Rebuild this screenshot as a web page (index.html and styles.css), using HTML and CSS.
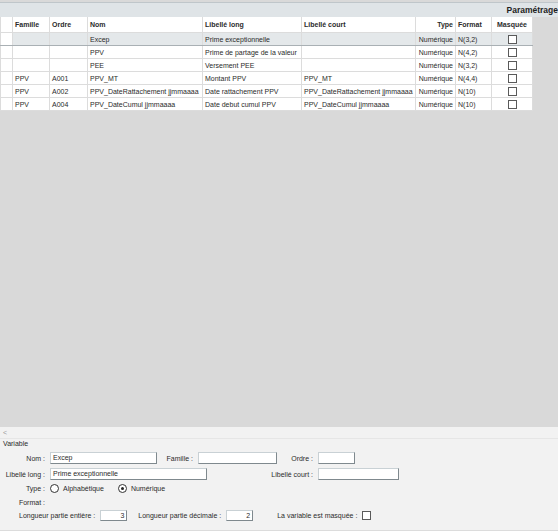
FILE: index.html
```html
<!DOCTYPE html>
<html lang="fr">
<head>
    <meta charset="UTF-8">
    <title>Paramétrage</title>
    <link rel="stylesheet" href="styles.css">
</head>
<body>
<div class="page">
    <div class="topbar"><span class="title">Paramétrage</span></div>
    <table class="grid">
        <colgroup>
            <col style="width:12px"><col style="width:37px"><col style="width:38px">
            <col style="width:115px"><col style="width:99px"><col style="width:114px">
            <col style="width:40px"><col style="width:36px"><col style="width:41px">
        </colgroup>
        <tr class="head">
            <th></th><th>Famille</th><th>Ordre</th><th>Nom</th><th>Libellé long</th>
            <th>Libellé court</th><th class="r">Type</th><th>Format</th><th class="c">Masquée</th>
        </tr>
        <tr class="sel">
            <td class="rh"></td><td></td><td></td><td>Excep</td><td>Prime exceptionnelle</td>
            <td></td><td class="r">Numérique</td><td>N(3,2)</td><td class="c"><span class="box"></span></td>
        </tr>
        <tr>
            <td class="rh"></td><td></td><td></td><td>PPV</td><td>Prime de partage de la valeur</td>
            <td></td><td class="r">Numérique</td><td>N(4,2)</td><td class="c"><span class="box"></span></td>
        </tr>
        <tr>
            <td class="rh"></td><td></td><td></td><td>PEE</td><td>Versement PEE</td>
            <td></td><td class="r">Numérique</td><td>N(3,2)</td><td class="c"><span class="box"></span></td>
        </tr>
        <tr>
            <td class="rh"></td><td>PPV</td><td>A001</td><td>PPV_MT</td><td>Montant PPV</td>
            <td>PPV_MT</td><td class="r">Numérique</td><td>N(4,4)</td><td class="c"><span class="box"></span></td>
        </tr>
        <tr>
            <td class="rh"></td><td>PPV</td><td>A002</td><td>PPV_DateRattachement jjmmaaaa</td><td>Date rattachement PPV</td>
            <td>PPV_DateRattachement jjmmaaaa</td><td class="r">Numérique</td><td>N(10)</td><td class="c"><span class="box"></span></td>
        </tr>
        <tr>
            <td class="rh"></td><td>PPV</td><td>A004</td><td>PPV_DateCumul jjmmaaaa</td><td>Date debut cumul PPV</td>
            <td>PPV_DateCumul jjmmaaaa</td><td class="r">Numérique</td><td>N(10)</td><td class="c"><span class="box"></span></td>
        </tr>
    </table>
    <div class="fill"></div>
    <div class="panel">
        <div class="scroll">&lt;</div>
        <div class="legend">Variable</div>
        <div class="row r1">
            <span class="lbl w46">Nom :</span><span class="field f-nom">Excep</span>
            <span class="lbl w36">Famille :</span><span class="field f-fam"></span>
            <span class="lbl w36">Ordre :</span><span class="field f-ord"></span>
        </div>
        <div class="row r2">
            <span class="lbl w46">Libellé long :</span><span class="field f-long">Prime exceptionnelle</span>
            <span class="lbl w107">Libellé court :</span><span class="field f-court"></span>
        </div>
        <div class="row r3">
            <span class="lbl w46">Type :</span>
            <span class="radio"></span><span class="opt">Alphabétique</span>
            <span class="radio on"></span><span class="opt">Numérique</span>
        </div>
        <div class="row r4">
            <span class="lbl w46">Format :</span>
        </div>
        <div class="row r5">
            <span class="lbl">Longueur partie entière :</span><span class="field num">3</span>
            <span class="lbl gap">Longueur partie décimale :</span><span class="field num">2</span>
            <span class="lbl gap2">La variable est masquée :</span><span class="box"></span>
        </div>
    </div>
</div>
</body>
</html>
```

FILE: styles.css
```css
body {
    margin: 0;
    font-family: "Liberation Sans", Arial, sans-serif;
    font-size: 7px;
    color: #2b2b2b;
}

.page {
    width: 558px;
    height: 531px;
    display: flex;
    flex-direction: column;
    background-color: #d9d9d9;
    overflow: hidden;
}

.topbar {
    height: 14px;
    margin-top: 2px;
    border-top: 1px solid #bfc6ca;
    background-color: #dfe4e7;
    display: flex;
    align-items: center;
    justify-content: flex-end;
    white-space: nowrap;
    overflow: hidden;
}

.title {
    font-weight: bold;
    font-size: 8.5px;
    margin-right: 0;
    color: #1e1e1e;
}

.grid {
    width: 532px;
    table-layout: fixed;
    border-collapse: collapse;
    background-color: #ffffff;
}

.grid th,
.grid td {
    padding: 0 2px;
    height: 12px;
    border: 1px solid #dcdcdc;
    text-align: left;
    white-space: nowrap;
    overflow: hidden;
}

.grid th {
    height: 15px;
    font-weight: bold;
    border-top: none;
}

.grid .r {
    text-align: right;
}

.grid .c {
    text-align: center;
}

.grid .sel td {
    background-color: #e4e8ea;
    border-top: 1px solid #a9b0b4;
    border-bottom: 1px solid #a9b0b4;
}

.grid .sel td.rh {
    background-color: #ffffff;
}

.box {
    display: inline-block;
    box-sizing: border-box;
    width: 9px;
    height: 9px;
    border: 1px solid #5a5a5a;
    background-color: #ffffff;
    vertical-align: middle;
}

.fill {
    flex: 1;
}

.panel {
    height: 104px;
    background-color: #f2f2f2;
    border-bottom: 1px solid #dcdcdc;
    box-sizing: border-box;
}

.scroll {
    height: 11px;
    line-height: 11px;
    padding-left: 3px;
    color: #9a9a9a;
    border-bottom: 1px solid #e6e6e6;
}

.legend {
    padding-left: 3px;
    height: 10px;
    line-height: 10px;
}

.row {
    display: flex;
    align-items: center;
    white-space: nowrap;
}

.r1 {
    margin-top: 3px;
    height: 12px;
}

.r2 {
    margin-top: 4px;
    height: 12px;
}

.r3 {
    margin-top: 3px;
    height: 11px;
}

.r4 {
    margin-top: 3px;
    height: 10px;
}

.r5 {
    margin-top: 3px;
    height: 11px;
    padding-left: 19px;
}

.lbl {
    display: inline-block;
    text-align: right;
    margin-right: 5px;
}

.w46 { width: 45px; }
.w36 { width: 36px; }
.w107 { width: 106px; }

.gap { margin-left: 11px; }
.gap2 { margin-left: 24px; }

.field {
    display: inline-block;
    box-sizing: border-box;
    height: 12px;
    line-height: 10px;
    padding: 0 2px;
    background-color: #ffffff;
    border: 1px solid #c9d1d5;
    border-right-color: #7f898e;
    border-bottom-color: #7f898e;
}

.r5 .field {
    height: 11px;
    line-height: 9px;
}

.f-nom { width: 107px; }
.f-fam { width: 79px; }
.f-ord { width: 37px; }
.f-long { width: 157px; }
.f-court { width: 81px; }

.num {
    width: 27px;
    text-align: right;
}

.radio {
    display: inline-block;
    box-sizing: border-box;
    width: 9px;
    height: 9px;
    border: 1px solid #333333;
    border-radius: 50%;
    background-color: #ffffff;
    position: relative;
    margin-right: 4px;
}

.radio.on::after {
    content: "";
    position: absolute;
    left: 2px;
    top: 2px;
    width: 3px;
    height: 3px;
    border-radius: 50%;
    background-color: #222222;
}

.opt {
    margin-right: 14px;
}
```
